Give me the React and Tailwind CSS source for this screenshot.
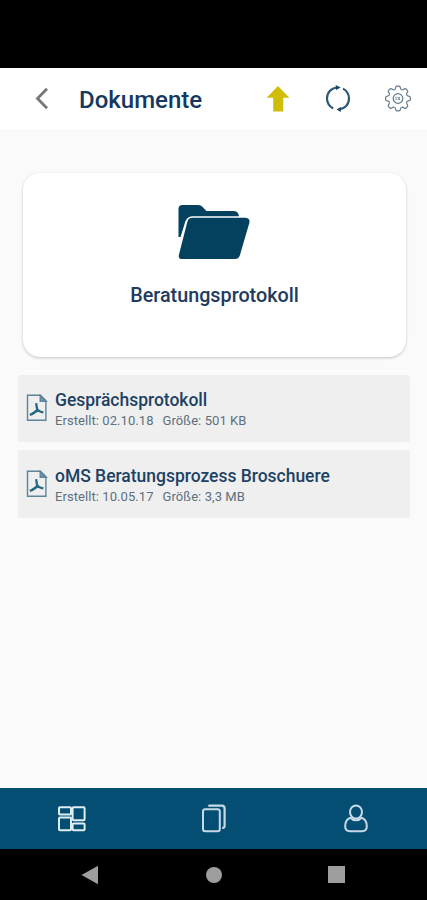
import React from 'react';

const documents = [
  { title: 'Gesprächsprotokoll', created: '02.10.18', size: '501 KB', box: 'h-[67px]' },
  { title: 'oMS Beratungsprozess Broschuere', created: '10.05.17', size: '3,3 MB', box: 'h-[68px]' },
];

const BackIcon = () => (
  <svg className="h-[26px] w-[20px]" viewBox="0 0 20 26" fill="none" stroke="#777777" strokeWidth="2.8">
    <path d="M15 2.8 5.5 12.5 15 22.3" />
  </svg>
);

const UploadIcon = () => (
  <svg className="h-[26px] w-[24px]" viewBox="0 0 24 26" fill="#d0bd08">
    <path d="M12 0 23.4 11.8H17.3V25.5H7.2V11.8H.6z" />
  </svg>
);

const SyncIcon = () => (
  <svg className="h-[28px] w-[26px]" viewBox="0 0 26 28" fill="none" stroke="#2c5875" strokeWidth="2.2">
    <path d="M8.2 23.4A11 11.4 0 0 1 2 13.5C2 7.7 6.2 3 12 2.5" />
    <path d="M18 3.6A11 11.4 0 0 1 24 13.5c0 5.8-4.2 10.3-10 10.9" />
    <path d="m10.7 0 5 2.5-4.6 2.6zM15.8 22l-4.3 2.4 4.3 2.6z" fill="#174768" stroke="none" />
  </svg>
);

const GearIcon = () => (
  <svg className="h-[28px] w-[26px]" viewBox="-13 -13.5 26 28" fill="none" stroke="#61798c" strokeWidth="1.2">
    {[0, 45, 90, 135, 180, 225, 270, 315].map((angle) => (
      <path
        key={angle}
        transform={`rotate(${angle})`}
        d="M-3.6-8.7Q-2.6-9-2.4-10.6Q-2.2-12.4-1-12.4H1Q2.2-12.4 2.4-10.6Q2.6-9 3.6-8.7"
      />
    ))}
    <circle r="4.8" />
    <path d="M-2-1.8V1.8M-.3-1.6 1.9 1.6M1.9-1.6-.3 1.6" strokeWidth="0.9" />
  </svg>
);

const FolderIcon = () => (
  <svg className="h-[56px] w-[74px]" viewBox="0 0 74 56" fill="#03415f">
    <path d="M1.5 33V5Q1.5 1 5.5 1H21Q24.5 1 26.5 4L29.5 7H56Q61.5 7 62 12.2H16Q10.5 12.2 8.5 17L3.5 33z" />
    <path d="M15.5 13.8H68Q73.5 13.8 72.3 19L62.8 51.5Q61.6 55 58 55H5.5Q.8 55 2 50.5L10.3 18Q11.3 13.8 15.5 13.8z" />
  </svg>
);

const PdfIcon = () => (
  <svg className="mb-px h-[28px] w-[22px] shrink-0" viewBox="0 0 22 28" fill="none" stroke="#5d8499" strokeWidth="1.4">
    <path d="M1.5 1.3h13l5.4 5.5v19.5H1.5z" />
    <path d="M14.2 1.5v5.8h6z" fill="#7897a8" />
    <path d="M10.2 9.2c.2 2.8.5 4.6 1.1 6.2 1.2 1.7 3 2.6 6.1 3M11.3 15.4c-1.3 2.5-3.8 4.3-7.5 5.4" stroke="#286a82" strokeWidth="2.3" />
    <path d="M6.5 18.9c2.3-1.1 4.8-1.7 7.8-1.8" stroke="#286a82" strokeWidth="1.2" />
  </svg>
);

const DashboardIcon = () => (
  <svg className="h-[28px] w-[30px]" viewBox="0 0 30 28" fill="none" stroke="#dfedf5" strokeWidth="2">
    <rect x="2" y="2.2" width="12" height="7.4" rx="1" />
    <rect x="15.6" y="2.2" width="12" height="13" rx="1" />
    <rect x="2" y="12.6" width="12" height="12.6" rx="1" />
    <rect x="15.6" y="18.4" width="12" height="6.8" rx="1" />
  </svg>
);

const CopyIcon = () => (
  <svg className="h-[30px] w-[26px]" viewBox="0 0 26 30" fill="none" stroke="#c8d9e6" strokeWidth="2">
    <rect x="2" y="5.2" width="16.8" height="22" rx="2.2" />
    <path d="M7.5 2.4Q8 1.6 9.5 1.6h11.3Q23.6 1.6 23.6 4.4V22q0 1.8-2.4 2.2" strokeWidth="2.2" />
  </svg>
);

const UserIcon = () => (
  <svg className="h-[30px] w-[26px]" viewBox="0 0 26 30" fill="none" stroke="#c8d9e6" strokeWidth="2">
    <ellipse cx="13" cy="8" rx="6" ry="6.5" />
    <path d="M7.6 13.8C3.6 14.9 2.2 18.2 2.2 22.6 2.2 26 3.6 27.2 7 27.2h12c3.4 0 4.8-1.2 4.8-4.6 0-4.4-1.4-7.7-5.4-8.8-2.5 3.2-8.3 3.2-10.8 0z" />
  </svg>
);

const Header = () => (
  <header className="flex h-[61px] items-center bg-white pl-8 pr-4">
    <button type="button" aria-label="Zurück"><BackIcon /></button>
    <h1 className="ml-[27px] flex-1 pt-[2px] text-2xl font-medium text-[#143861]">Dokumente</h1>
    <div className="flex items-center">
      <button type="button" aria-label="Hochladen" className="mr-[35px]"><UploadIcon /></button>
      <button type="button" aria-label="Aktualisieren" className="mr-[34px]"><SyncIcon /></button>
      <button type="button" aria-label="Einstellungen"><GearIcon /></button>
    </div>
  </header>
);

const DocumentRow = ({ doc }) => (
  <li className={`flex items-center rounded-[3px] bg-[#efefef] pl-2 ${doc.box}`}>
    <PdfIcon />
    <div className="ml-[7px] pt-[3px]">
      <p className="text-[17.5px] font-medium leading-[21px] tracking-[-0.02px] text-[#1d4263]">{doc.title}</p>
      <p className="flex gap-[9px] text-[13px] leading-[19px] tracking-[0.07px] text-[#5d6f80]">
        <span>Erstellt: {doc.created}</span>
        <span>Größe: {doc.size}</span>
      </p>
    </div>
  </li>
);

const App = () => {
  return (
    <div className="flex h-[900px] w-[427px] flex-col overflow-hidden bg-[#fafafa] font-[Roboto,sans-serif]">
      <div className="h-[68px] shrink-0 bg-black" />
      <Header />

      <main className="flex-1 px-[18px] pt-[44px]">
        <section className="ml-[5px] mr-[4px] flex h-[184px] w-[383px] flex-col items-center rounded-[17px] bg-white pt-[31px] shadow-[0_1px_3px_rgba(0,0,0,0.22)]">
          <div className="mr-[2px]"><FolderIcon /></div>
          <h2 className="mt-[22px] text-[19.8px] font-medium leading-7 text-[#223a5e]">Beratungsprotokoll</h2>
        </section>

        <ul className="mt-[18px] flex w-[392px] flex-col gap-[8px]">
          {documents.map((doc) => (
            <DocumentRow key={doc.title} doc={doc} />
          ))}
        </ul>
      </main>

      <nav className="grid h-[61px] shrink-0 grid-cols-3 items-center justify-items-center bg-[#044e74] pl-px">
        <button type="button" aria-label="Übersicht"><DashboardIcon /></button>
        <button type="button" aria-label="Dokumente"><CopyIcon /></button>
        <button type="button" aria-label="Profil"><UserIcon /></button>
      </nav>

      {/* Android Systemleiste */}
      <div className="flex h-[51px] shrink-0 items-center justify-between bg-black pl-[81px] pr-[82px]">
        <svg className="h-[20px] w-[17px]" viewBox="0 0 17 20" fill="#9e9e9e"><path d="M.5 10 17 .8v18.4z" /></svg>
        <span className="ml-px h-4 w-4 rounded-full bg-[#9e9e9e]" />
        <span className="h-[17px] w-[17px] bg-[#9e9e9e]" />
      </div>
    </div>
  );
};

export default App;
